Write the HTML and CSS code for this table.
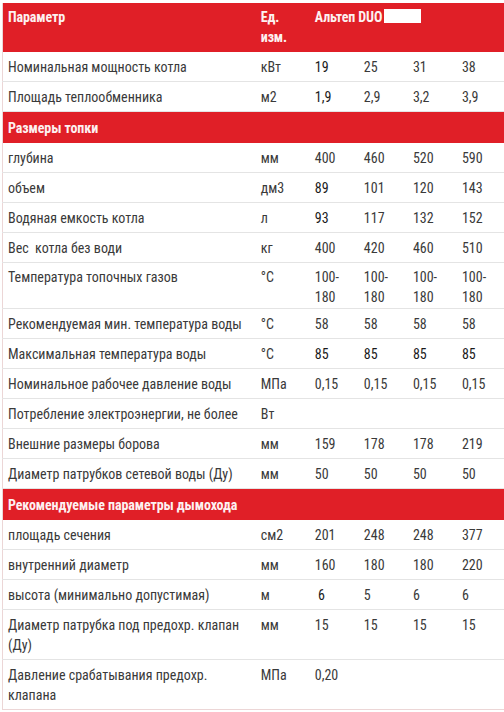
FILE: index.html
```html
<!DOCTYPE html>
<html lang="ru">
<head>
<meta charset="utf-8">
<link rel="stylesheet" href="styles.css">
</head>
<body>
<div class="wrap">
<table class="spec">
<colgroup>
<col class="c-param"><col class="c-unit"><col class="c-val"><col class="c-val"><col class="c-val"><col class="c-last">
</colgroup>
<tr class="head">
<th>Параметр</th><th>Ед.<br>изм.</th><th colspan="4">Альтеп DUO<span class="mask"></span></th>
</tr>
<tr><td>Номинальная мощность котла</td><td>кВт</td><td class="dk">19</td><td>25</td><td>31</td><td>38</td></tr>
<tr><td>Площадь теплообменника</td><td>м2</td><td class="dk">1,9</td><td>2,9</td><td>3,2</td><td>3,9</td></tr>
<tr class="sec"><td colspan="6">Размеры топки</td></tr>
<tr><td>глубина</td><td>мм</td><td>400</td><td>460</td><td>520</td><td>590</td></tr>
<tr><td>объем</td><td>дм3</td><td class="dk">89</td><td>101</td><td>120</td><td>143</td></tr>
<tr><td>Водяная емкость котла</td><td>л</td><td class="dk">93</td><td>117</td><td>132</td><td>152</td></tr>
<tr><td>Вес&nbsp; котла без води</td><td>кг</td><td>400</td><td>420</td><td>460</td><td>510</td></tr>
<tr class="tight"><td>Температура топочных газов</td><td>°C</td><td>100-<br>180</td><td>100-<br>180</td><td>100-<br>180</td><td>100-<br>180</td></tr>
<tr><td>Рекомендуемая мин. температура воды</td><td>°C</td><td>58</td><td>58</td><td>58</td><td>58</td></tr>
<tr><td>Максимальная температура воды</td><td>°C</td><td class="dk">85</td><td class="dk">85</td><td class="dk">85</td><td class="dk">85</td></tr>
<tr><td>Номинальное рабочее давление воды</td><td>МПа</td><td>0,15</td><td>0,15</td><td>0,15</td><td>0,15</td></tr>
<tr><td>Потребление электроэнергии, не более</td><td>Вт</td><td></td><td></td><td></td><td></td></tr>
<tr><td>Внешние размеры борова</td><td>мм</td><td>159</td><td>178</td><td>178</td><td>219</td></tr>
<tr><td>Диаметр патрубков сетевой воды (Ду)</td><td>мм</td><td>50</td><td>50</td><td>50</td><td>50</td></tr>
<tr class="sec"><td colspan="6">Рекомендуемые параметры дымохода</td></tr>
<tr><td>площадь сечения</td><td>см2</td><td>201</td><td>248</td><td>248</td><td>377</td></tr>
<tr><td>внутренний диаметр</td><td>мм</td><td>160</td><td>180</td><td>180</td><td>220</td></tr>
<tr><td>высота (минимально допустимая)</td><td>м</td><td class="dk">&nbsp;6</td><td>5</td><td>6</td><td>6</td></tr>
<tr><td>Диаметр патрубка под предохр. клапан (Ду)</td><td>мм</td><td>15</td><td>15</td><td>15</td><td>15</td></tr>
<tr class="last"><td>Давление срабатывания предохр. клапана</td><td>МПа</td><td>0,20</td><td></td><td></td><td></td></tr>
</table>
</div>
</body>
</html>
```

FILE: styles.css
```css
html, body {
  margin: 0;
  padding: 0;
  background: #fff;
}
.wrap {
  padding: 3px 0 0 2px;
}
.spec {
  width: 502px;
  border-collapse: collapse;
  table-layout: fixed;
  font-family: Roboto, "Noto Sans", sans-serif;
  font-size: 14px;
  font-stretch: 87.5%;
  line-height: 20px;
  color: #3a3a3a;
  border-left: 1px solid #ecd6d6;
}
.c-param { width: 250px; }
.c-unit { width: 54px; }
.c-val { width: 49px; }
.c-last { width: 50px; }
.spec td, .spec th {
  padding: 5px 0 4px 8px;
  vertical-align: top;
  text-align: left;
  border-bottom: 1px solid #e4e4e4;
}
.spec td:first-child, .spec th:first-child { padding-left: 5px; }
.spec tr.tight td { padding-top: 4px; padding-bottom: 1px; }
.head th {
  background: #e01f27;
  color: #fdf1f1;
  font-weight: 700;
  font-size: 14px;
  letter-spacing: -0.1px;
  padding-top: 4px;
  padding-bottom: 5px;
  border-bottom: none;
}
.mask {
  display: inline-block;
  width: 37px;
  height: 14px;
  background: #fff;
  vertical-align: -1px;
  margin-left: 2px;
}
.sec td {
  background: #e01f27;
  color: #fdf1f1;
  font-weight: 700;
  font-size: 14px;
  letter-spacing: -0.1px;
  padding-top: 6px;
  padding-bottom: 5px;
  border-bottom: none;
}
.dk { color: #1a1a1a; }
.last td { border-bottom: 1px solid #ecd6d6; }
```
